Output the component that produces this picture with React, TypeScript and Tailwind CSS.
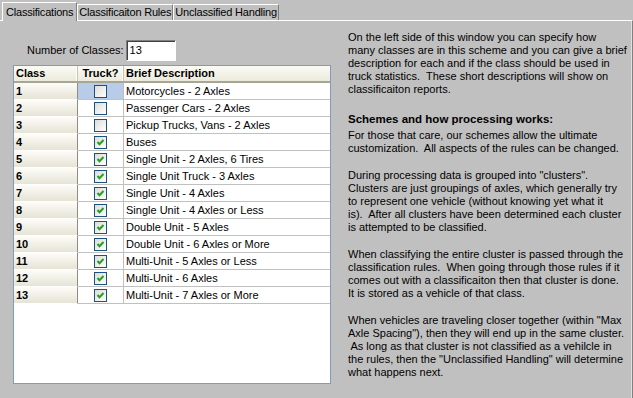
import React from "react";

const ROWS = [
  { n: 1, truck: false, desc: "Motorcycles - 2 Axles" },
  { n: 2, truck: false, desc: "Passenger Cars - 2 Axles" },
  { n: 3, truck: false, desc: "Pickup Trucks, Vans - 2 Axles" },
  { n: 4, truck: true, desc: "Buses" },
  { n: 5, truck: true, desc: "Single Unit - 2 Axles, 6 Tires" },
  { n: 6, truck: true, desc: "Single Unit Truck - 3 Axles" },
  { n: 7, truck: true, desc: "Single Unit - 4 Axles" },
  { n: 8, truck: true, desc: "Single Unit - 4 Axles or Less" },
  { n: 9, truck: true, desc: "Double Unit - 5 Axles" },
  { n: 10, truck: true, desc: "Double Unit - 6 Axles or More" },
  { n: 11, truck: true, desc: "Multi-Unit - 5 Axles or Less" },
  { n: 12, truck: true, desc: "Multi-Unit - 6 Axles" },
  { n: 13, truck: true, desc: "Multi-Unit - 7 Axles or More" },
];

const INTRO = [
  "On the left side of this window you can specify how",
  "many classes are in this scheme and you can give a brief",
  "description for each and if the class should be used in",
  "truck statistics.  These short descriptions will show on",
  "classificaiton reports.",
];

const PARAS = [
  [
    "For those that care, our schemes allow the ultimate",
    "customization.  All aspects of the rules can be changed.",
  ],
  [
    'During processing data is grouped into "clusters".',
    "Clusters are just groupings of axles, which generally try",
    "to represent one vehicle (without knowing yet what it",
    "is).  After all clusters have been determined each cluster",
    "is attempted to be classified.",
  ],
  [
    "When classifying the entire cluster is passed through the",
    "classification rules.  When going through those rules if it",
    "comes out with a classificaiton then that cluster is done.",
    "It is stored as a vehicle of that class.",
  ],
  [
    'When vehicles are traveling closer together (within "Max',
    'Axle Spacing"), then they will end up in the same cluster.',
    " As long as that cluster is not classified as a vehilcle in",
    'the rules, then the "Unclassified Handling" will determine',
    "what happens next.",
  ],
];

function CheckBox({ checked }: { checked: boolean }) {
  return (
    <div className="w-[13px] h-[13px] border border-[#1c5180] bg-gradient-to-br from-[#dcdcd7] to-white flex items-center justify-center">
      {checked && (
        <svg width="11" height="11" viewBox="0 0 11 11">
          <polyline points="2.5,5 4.5,7.2 8.5,3" fill="none" stroke="#21a121" strokeWidth="2" />
        </svg>
      )}
    </div>
  );
}

function Lines({ lines }: { lines: string[] }) {
  return (
    <div>
      {lines.map((l, i) => (
        <div key={i} className="h-[13px] leading-[13px] whitespace-pre">
          {l}
        </div>
      ))}
    </div>
  );
}

export default function App() {
  return (
    <div
      className="w-[633px] h-[398px] bg-[#c0c0c0] flex flex-col overflow-hidden text-[11px] text-black"
      style={{ fontFamily: '"Liberation Sans", Arial, sans-serif' }}
    >
      {/* Tabs */}
      <div className="h-[20px] flex items-end pl-[2px] tracking-[-0.2px]">
        <div className="relative z-10 mb-[-1px] h-[19px] px-[3px] pt-[2px] bg-[#c0c0c0] border-t border-l border-white border-r border-r-[#808080] leading-[14px]">
          Classifications
        </div>
        <div className="h-[16px] px-[1px] border-t border-l border-white border-r border-r-[#808080] leading-[14px]">
          Classificaiton Rules
        </div>
        <div className="h-[16px] px-[1px] border-t border-l border-white border-r border-r-[#808080] leading-[14px]">
          Unclassified Handling
        </div>
      </div>

      {/* Panel */}
      <div className="flex-1 flex border-t border-white border-r border-r-[#808080] shadow-[inset_-1px_0_0_#e0e0e0]">
        {/* Left: classes grid */}
        <div className="w-[331px] pl-[13px] flex flex-col">
          <div className="mt-[19px] pl-[14px] flex items-center h-[21px]">
            <span>Number of Classes:</span>
            <div className="ml-[2px] w-[50px] h-[21px] bg-white border border-t-[#808080] border-l-[#808080] border-r-white border-b-white shadow-[inset_1px_1px_0_#404040] pl-[3px] leading-[19px]">
              13
            </div>
          </div>

          <div className="mt-[4px] w-[318px] h-[319px] border border-[#7f9db9] bg-white flex flex-col">
            <div className="h-[17px] flex font-bold bg-gradient-to-b from-[#fbfbf6] to-[#ebeadb] border-b-2 border-[#a7a594] leading-[15px]">
              <div className="w-[64px] pl-[2px] border-r border-[#c7c5b2] shadow-[inset_-1px_0_0_#fff]">Class</div>
              <div className="w-[46px] text-center border-r border-[#c7c5b2] shadow-[inset_-1px_0_0_#fff]">Truck?</div>
              <div className="flex-1 pl-[2px]">Brief Description</div>
            </div>
            {ROWS.map((r) => (
              <div key={r.n} className="h-[17px] flex">
                <div className="w-[64px] pl-[2px] font-bold bg-gradient-to-b from-[#fdfcf8] to-[#e6e4d6] border-r border-[#8f8d81] border-b border-b-white leading-[16px]">
                  {r.n}
                </div>
                <div
                  className={`w-[46px] flex items-center justify-center border-r border-b border-[#c0c0c0] ${
                    r.n === 1 ? "bg-[#b8cbe8]" : ""
                  }`}
                >
                  <CheckBox checked={r.truck} />
                </div>
                <div className="flex-1 pl-[2px] border-b border-[#c0c0c0] leading-[16px] whitespace-nowrap">
                  {r.desc}
                </div>
              </div>
            ))}
          </div>
        </div>

        {/* Right: help text */}
        <div className="ml-[17px] mt-[10px] flex flex-col">
          <Lines lines={INTRO} />
          <div className="mt-[15px] h-[16px] leading-[16px] text-[11.5px] font-bold">
            Schemes and how processing works:
          </div>
          <div className="mt-[2px]">
            <Lines lines={PARAS[0]} />
          </div>
          {PARAS.slice(1).map((p, i) => (
            <div key={i} className="mt-[14px]">
              <Lines lines={p} />
            </div>
          ))}
        </div>
      </div>
    </div>
  );
}
